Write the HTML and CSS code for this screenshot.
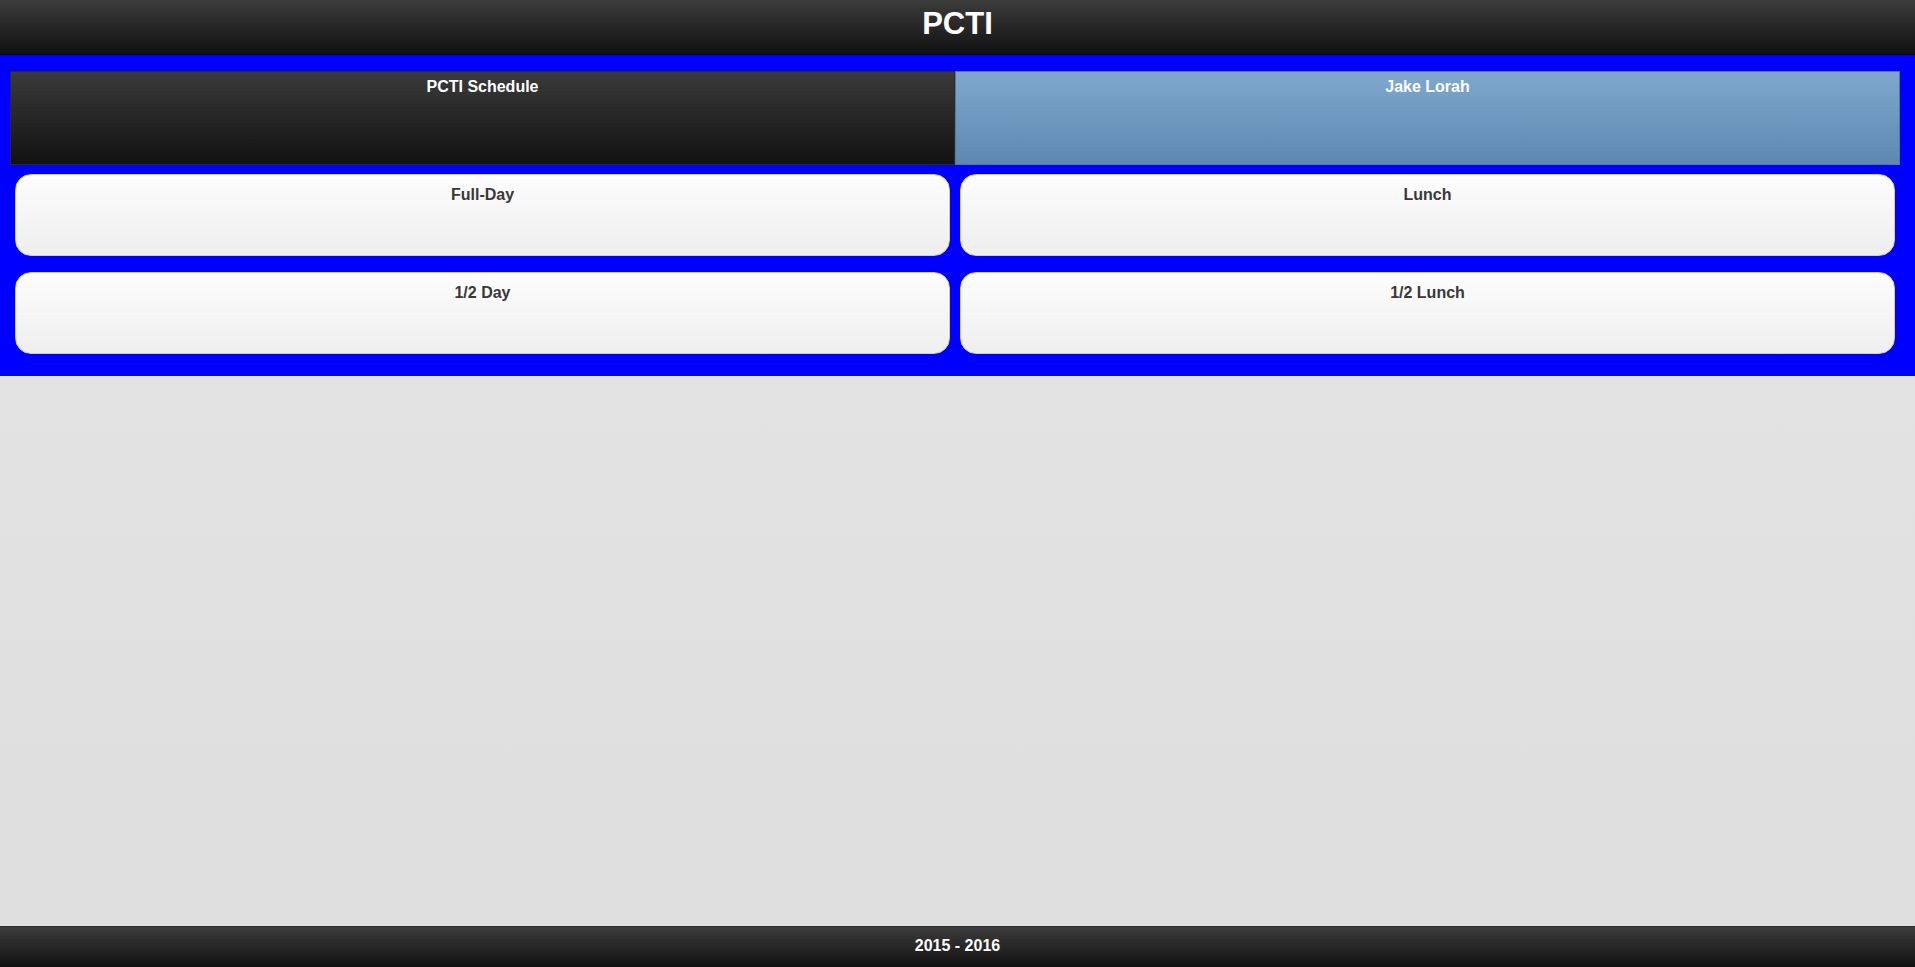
FILE: index.html
```html
<!DOCTYPE html>
<html lang="en">
  <head>
    <meta charset="UTF-8" />
    <meta name="viewport" content="width=device-width, initial-scale=1.0" />
    <title>PCTI</title>
    <link rel="stylesheet" href="styles.css">
  </head>
  <body>
    <div class="page">
      <div class="header">
        <h1>PCTI</h1>
      </div>
      <div class="content">
        <div class="navbar">
          <a href="#" class="tab">PCTI Schedule</a>
          <a href="#" class="tab tab-active">Jake Lorah</a>
        </div>
        <div class="button-grid">
          <a href="#" class="btn">Full-Day</a>
          <a href="#" class="btn">Lunch</a>
          <a href="#" class="btn">1/2 Day</a>
          <a href="#" class="btn">1/2 Lunch</a>
        </div>
      </div>
      <div class="filler"></div>
      <div class="footer">
        <h4>2015 - 2016</h4>
      </div>
    </div>
  </body>
</html>
```

FILE: styles.css
```css
html,
body {
  margin: 0;
  padding: 0;
  height: 100%;
}
body {
  font-family: "Liberation Sans", Arial, sans-serif;
  font-size: 16px;
}
.page {
  display: flex;
  flex-direction: column;
  min-height: 100vh;
  background: linear-gradient(#e6e6e6, #dedede);
}
.header {
  background: linear-gradient(#3c3c3c, #111111);
  border-bottom: 1px solid #0b0b0b;
  color: white;
  text-align: center;
  padding: 5px 0 12px;
}
.header h1 {
  margin: 0;
  font-size: 31px;
  font-weight: bold;
  line-height: 37px;
}
.content {
  background-color: #0000ff;
  padding: 16px 15px 22px 10px;
}
.navbar {
  display: grid;
  grid-template-columns: 1fr 1fr;
  height: 94px;
}
.tab {
  box-sizing: border-box;
  text-align: center;
  color: white;
  font-weight: bold;
  text-decoration: none;
  padding-top: 6px;
  line-height: 18px;
  background: linear-gradient(#3a3a3a, #121212);
  border: 1px solid #2a2a2a;
}
.tab-active {
  background: linear-gradient(#80a8ce, #5d88b0);
  border: 1px solid #4f7aa6;
}
.button-grid {
  display: grid;
  grid-template-columns: 1fr 1fr;
  gap: 16px 10px;
  margin: 9px 5px 0;
}
.btn {
  box-sizing: border-box;
  height: 82px;
  border: 1px solid #cccccc;
  border-radius: 16px;
  background: linear-gradient(#fdfdfd, #eeeeee);
  color: #383838;
  font-weight: bold;
  text-align: center;
  text-decoration: none;
  padding-top: 11px;
  line-height: 18px;
}
.filler {
  flex: 1;
}
.footer {
  background: linear-gradient(#3c3c3c, #111111);
  border-top: 1px solid #2b2b2b;
  color: white;
  text-align: center;
  padding: 10px 0 12px;
}
.footer h4 {
  margin: 0;
  font-size: 16px;
  line-height: 18px;
}
```
